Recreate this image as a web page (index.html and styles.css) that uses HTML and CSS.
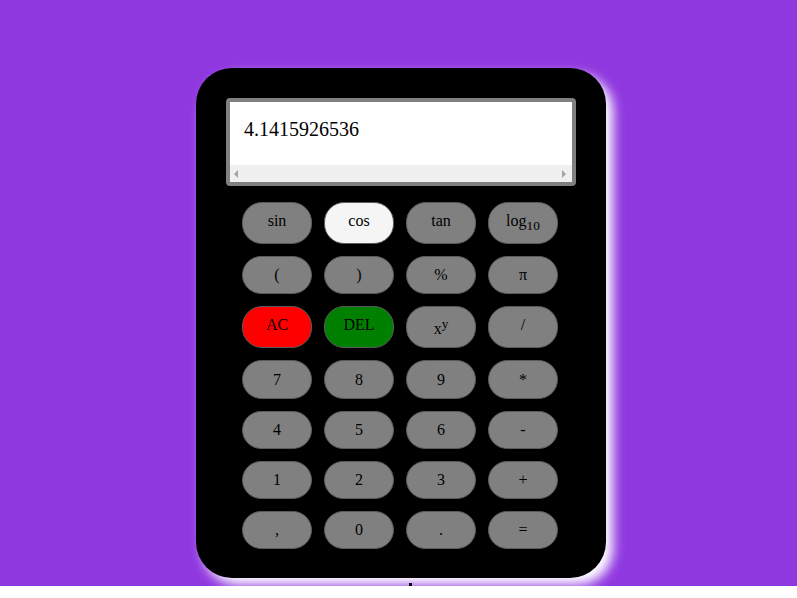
FILE: index.html
```html
<!DOCTYPE html>
<html>
<head>
<meta charset="utf-8">
<link rel="stylesheet" href="styles.css">
</head>
<body>
<div class="page">
  <div class="calc">
    <div class="display">
      <div class="screen">4.1415926536</div>
      <div class="hscroll">
        <span class="arrow left"></span>
        <span class="arrow right"></span>
      </div>
    </div>
    <div class="keys">
      <button class="key tall">sin</button>
      <button class="key tall active">cos</button>
      <button class="key tall">tan</button>
      <button class="key">log<sub>10</sub></button>
      <button class="key">(</button>
      <button class="key">)</button>
      <button class="key">%</button>
      <button class="key">π</button>
      <button class="key tall red">AC</button>
      <button class="key tall green">DEL</button>
      <button class="key">x<sup>y</sup></button>
      <button class="key tall">/</button>
      <button class="key">7</button>
      <button class="key">8</button>
      <button class="key">9</button>
      <button class="key">*</button>
      <button class="key">4</button>
      <button class="key">5</button>
      <button class="key">6</button>
      <button class="key">-</button>
      <button class="key">1</button>
      <button class="key">2</button>
      <button class="key">3</button>
      <button class="key">+</button>
      <button class="key">,</button>
      <button class="key">0</button>
      <button class="key">.</button>
      <button class="key">=</button>
    </div>
  </div>
  <span class="dot"></span>
</div>
</body>
</html>
```
FILE: styles.css
```css
html, body {
  margin: 0;
  padding: 0;
  background: #ffffff;
}
.page {
  position: relative;
  height: 586px;
  background: #9038e0;
  padding: 68px 0 0 196px;
  box-sizing: border-box;
  overflow: hidden;
  font-family: "Liberation Serif", "Times New Roman", serif;
}
.calc {
  width: 410px;
  height: 510px;
  box-sizing: border-box;
  background: #000;
  border-radius: 36px;
  padding: 30px;
  box-shadow: 7px 7px 12px #ffffff;
}
.display {
  width: 350px;
  height: 88px;
  box-sizing: border-box;
  border: 4px solid #808080;
  border-radius: 4px;
  background: #fff;
  display: flex;
  flex-direction: column;
}
.screen {
  flex: 1;
  font-family: "Liberation Serif", "Times New Roman", serif;
  font-size: 20px;
  color: #000;
  padding: 16px 0 0 14px;
  line-height: 23px;
}
.hscroll {
  height: 17px;
  background: #f0f0f0;
  display: flex;
  justify-content: space-between;
  align-items: center;
  padding: 0 6px 0 4px;
}
.arrow {
  width: 0;
  height: 0;
  border-top: 4px solid transparent;
  border-bottom: 4px solid transparent;
}
.arrow.left { border-right: 4px solid #a3a3a3; }
.arrow.right { border-left: 4px solid #a3a3a3; }
.keys {
  display: grid;
  grid-template-columns: repeat(4, 70px);
  grid-template-rows: 42px 38px 42px 39px 38px 38px 38px;
  gap: 12px;
  margin: 16px 0 0 16px;
}
.key {
  font-family: "Liberation Serif", "Times New Roman", serif;
  font-size: 16px;
  color: #000;
  background: #808080;
  border: 1px solid #5a5a5a;
  border-radius: 20px;
  padding: 0;
  margin: 0;
}
.key.tall { padding-bottom: 4px; }
.key.active { background: #f5f5f5; }
.key.red { background: #ff0000; }
.key.green { background: #008000; }
.dot {
  position: absolute;
  left: 409px;
  top: 583px;
  width: 3px;
  height: 3px;
  background: #000;
}
```
